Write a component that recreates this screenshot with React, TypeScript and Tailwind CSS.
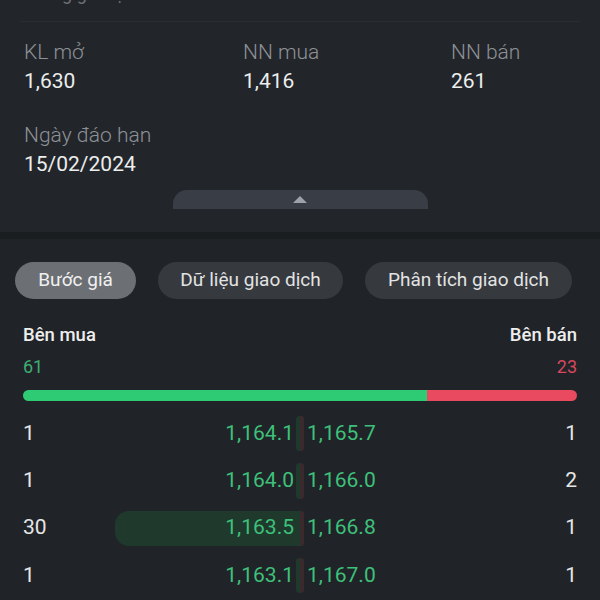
const stats = [
  { label: 'KL mở', value: '1,630' },
  { label: 'NN mua', value: '1,416' },
  { label: 'NN bán', value: '261' },
]

const rows = [
  { bidVol: '1', bid: '1,164.1', ask: '1,165.7', askVol: '1', bidBar: 0 },
  { bidVol: '1', bid: '1,164.0', ask: '1,166.0', askVol: '2', bidBar: 0 },
  { bidVol: '30', bid: '1,163.5', ask: '1,166.8', askVol: '1', bidBar: 185 },
  { bidVol: '1', bid: '1,163.1', ask: '1,167.0', askVol: '1', bidBar: 0 },
]

const tabs = [
  { name: 'Bước giá', w: 'w-[121px]' },
  { name: 'Dữ liệu giao dịch', w: 'w-[185px]' },
  { name: 'Phân tích giao dịch', w: 'w-[207px]' },
]

export default function App() {
  return (
    <div className="w-[600px] h-[600px] overflow-hidden bg-[#202428] font-['Roboto',sans-serif]">
      {/* summary panel */}
      <div className="bg-[#22262b]">
        <div className="h-[22px] mx-5 border-b border-[#2a2e33] overflow-hidden">
          <div className="-mt-[20px] pl-3 text-[18px] text-[#6f7378]">Tổng giá trị</div>
        </div>
        <div className="grid grid-cols-[219px_208px_1fr] pl-6 pt-[16px]">
          {stats.map((s) => (
            <div key={s.label} className="flex flex-col">
              <span className="text-[21px] leading-[29px] text-[#8e9196] font-light">{s.label}</span>
              <span className="text-[21px] leading-[29px] text-[#eceded]">{s.value}</span>
            </div>
          ))}
        </div>
        <div className="flex flex-col pl-6 mt-[25px]">
          <span className="text-[21px] leading-[29px] text-[#8e9196] font-light">Ngày đáo hạn</span>
          <span className="text-[21px] leading-[29px] text-[#eceded]">15/02/2024</span>
        </div>
        <div className="flex justify-center mt-[11px] pb-[23px]">
          <div className="w-[255px] h-[19px] rounded-t-[14px] bg-[#393d46] flex items-start justify-center pt-[6px]">
            <div className="w-0 h-0 border-l-[7px] border-r-[7px] border-b-[7px] border-l-transparent border-r-transparent border-b-[#9da1a8]" />
          </div>
        </div>
      </div>
      <div className="h-[7px] bg-[#1a1d20]" />

      {/* order book */}
      <div className="px-[23px] pt-[23px]">
        <div className="flex gap-[22px] -ml-[8px]">
          {tabs.map((t, i) => (
            <button
              key={t.name}
              className={
                i === 0
                  ? `${t.w} h-[37px] rounded-full bg-[#6c6f73] text-[19px] text-[#f1f1f1]`
                  : `${t.w} h-[37px] rounded-full bg-[#36393d] text-[19px] text-[#e2e3e4]`
              }
            >
              {t.name}
            </button>
          ))}
        </div>

        <div className="flex justify-between mt-[24px] text-[18.5px] font-medium text-[#eeeeee] leading-[25px]">
          <span>Bên mua</span>
          <span>Bên bán</span>
        </div>
        <div className="flex justify-between mt-[7px] text-[18px] leading-[24px]">
          <span className="text-[#3fae72]">61</span>
          <span className="text-[#d8475e]">23</span>
        </div>
        <div className="flex h-[11px] mt-[11px] rounded-full overflow-hidden">
          <div className="w-[73%] bg-[#2fcb74]" />
          <div className="flex-1 bg-[#e94a5f]" />
        </div>

        <div className="mt-[9px] flex flex-col">
          {rows.map((r, i) => (
            <div key={i} className="relative h-[47.3px] flex items-center text-[21px]">
              <div className="absolute top-[6px] bottom-[6px] right-[277px] flex justify-end">
                <div
                  className="h-full rounded-l-[14px] bg-[#1f3a2d]"
                  style={{ width: Math.max(r.bidBar, 4) }}
                />
              </div>
              <div className="absolute top-[6px] bottom-[6px] left-[277px] w-[4px] rounded-r-[3px] bg-[#3a2a2e]" />
              <span className="relative w-[60px] text-[#e6e6e6]">{r.bidVol}</span>
              <span className="relative w-[211px] text-right text-[#3ec07a]">{r.bid}</span>
              <span className="relative ml-[13px] text-[#3ec07a]">{r.ask}</span>
              <span className="relative ml-auto text-[#e6e6e6]">{r.askVol}</span>
            </div>
          ))}
        </div>
      </div>
    </div>
  )
}
